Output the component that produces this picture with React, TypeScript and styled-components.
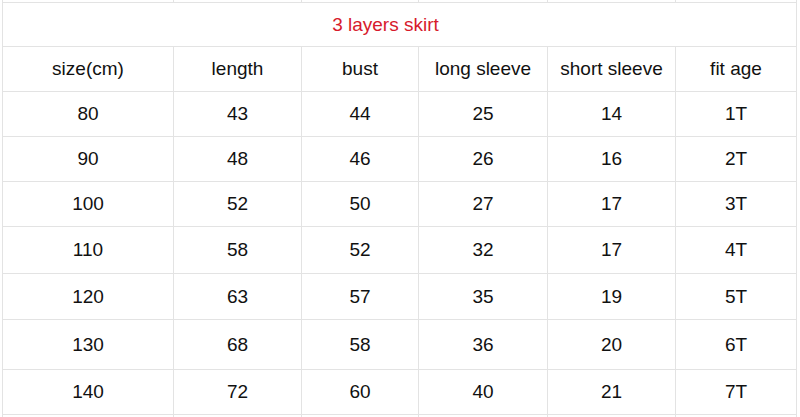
import styled, { createGlobalStyle } from "styled-components";

const GlobalStyle = createGlobalStyle`
  html, body {
    margin: 0;
    padding: 0;
    background: #ffffff;
  }
  body {
    font-family: "Liberation Sans", Arial, sans-serif;
    color: #111111;
  }
`;

const LINE = "#e3e3e3";
const COLUMNS = "171px 128px 117px 129px 128px 121px";

const headers = ["size(cm)", "length", "bust", "long sleeve", "short sleeve", "fit age"];

const rows: { h: number; cells: string[] }[] = [
  { h: 45, cells: ["80", "43", "44", "25", "14", "1T"] },
  { h: 45, cells: ["90", "48", "46", "26", "16", "2T"] },
  { h: 45, cells: ["100", "52", "50", "27", "17", "3T"] },
  { h: 47, cells: ["110", "58", "52", "32", "17", "4T"] },
  { h: 46, cells: ["120", "63", "57", "35", "19", "5T"] },
  { h: 50, cells: ["130", "68", "58", "36", "20", "6T"] },
  { h: 45, cells: ["140", "72", "60", "40", "21", "7T"] },
];

const Page = styled.div`
  width: 800px;
  height: 417px;
  overflow: hidden;
  background: #ffffff;
  padding-left: 2px;
  box-sizing: border-box;
`;

const Sheet = styled.div`
  border-left: 1px solid ${LINE};
  display: flex;
  flex-direction: column;
  width: max-content;
`;

const Row = styled.div<{ $h: number }>`
  display: grid;
  grid-template-columns: ${COLUMNS};
  height: ${(p) => p.$h}px;
`;

const Cell = styled.div`
  box-sizing: border-box;
  border-right: 1px solid ${LINE};
  border-bottom: 1px solid ${LINE};
  display: flex;
  align-items: center;
  justify-content: center;
  font-size: 19px;
  white-space: nowrap;
`;

const TitleCell = styled(Cell)`
  grid-column: 1 / -1;
  padding-right: 28px;
  color: #d71a2c;
`;

export default function App() {
  return (
    <>
      <GlobalStyle />
      <Page>
        <Sheet>
          <Row $h={3}>
            {headers.map((h) => (
              <Cell key={h} />
            ))}
          </Row>
          <Row $h={44}>
            <TitleCell>3 layers skirt</TitleCell>
          </Row>
          <Row $h={45}>
            {headers.map((h) => (
              <Cell key={h}>{h}</Cell>
            ))}
          </Row>
          {rows.map((r) => (
            <Row key={r.cells[0]} $h={r.h}>
              {r.cells.map((c, i) => (
                <Cell key={i}>{c}</Cell>
              ))}
            </Row>
          ))}
          <Row $h={3}>
            {headers.map((h) => (
              <Cell key={h} />
            ))}
          </Row>
        </Sheet>
      </Page>
    </>
  );
}
